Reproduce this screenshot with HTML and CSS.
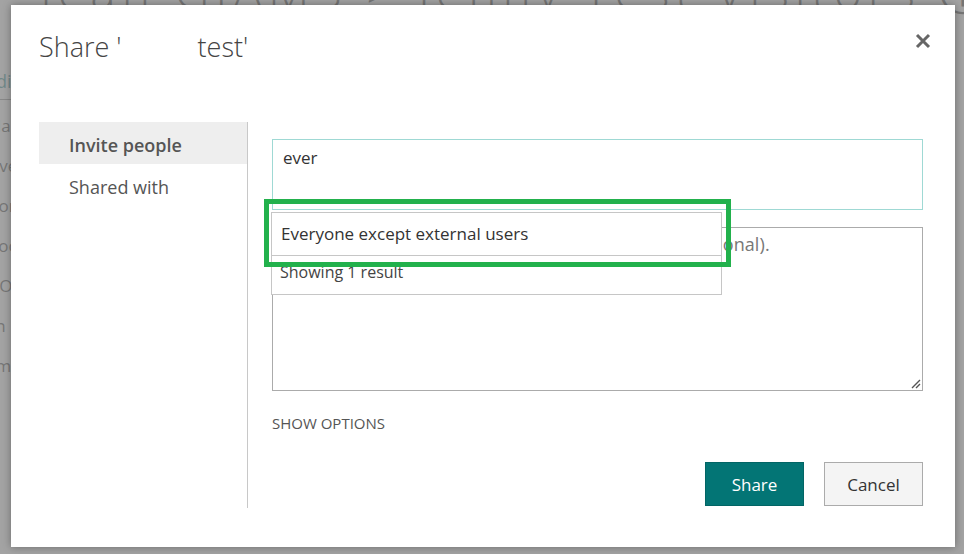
FILE: index.html
```html
<!DOCTYPE html>
<html>
<head>
  <title>Share</title>
  <link rel="stylesheet" href="styles.css">
</head>
<body>
  <!-- page behind the dialog -->
  <div id="page">
    <div class="page-title">Jean GIAMS &gt; Jenny Test Visitors &#9432;</div>
    <div class="page-side">
      <div class="side-link">Edit</div>
      <div class="side-rule"></div>
      <div class="side-item">Main</div>
      <div class="side-item">Over</div>
      <div class="side-item">Home</div>
      <div class="side-item">Doc</div>
      <div class="side-item">OO</div>
      <div class="side-item">Sn</div>
      <div class="side-item">Em</div>
    </div>
  </div>
  <div id="overlay"></div>

  <div id="dialog">
    <div class="dialog-head">
      <h1 class="dialog-title">Share '<span class="blanked"></span>test'</h1>
      <button class="close-button" title="Close">
        <svg width="16" height="16" viewBox="0 0 16 16"><path d="M2 2 L14 14 M14 2 L2 14" stroke="#666" stroke-width="3"/></svg>
      </button>
    </div>

    <div class="dialog-body">
      <div class="side-nav">
        <div class="nav-item selected">Invite people</div>
        <div class="nav-item">Shared with</div>
      </div>

      <div class="share-form">
        <div class="people-box">ever</div>
        <div class="message-box">
          <span class="placeholder">Include a personal message with this invitation (optional).</span>
          <svg class="grip" width="10" height="10" viewBox="0 0 10 10"><path d="M1 9 L9 1 M5 9 L9 5" stroke="#555" stroke-width="1.4"/></svg>
        </div>
        <div class="show-options">SHOW OPTIONS</div>
        <div class="actions">
          <button class="btn primary">Share</button>
          <button class="btn">Cancel</button>
        </div>

        <!-- suggestion list over the message box -->
        <div class="suggestions">
          <div class="suggestion">Everyone except external users</div>
          <div class="result-count">Showing 1 result</div>
        </div>
        <div class="highlight"></div>
      </div>
    </div>
  </div>
</body>
</html>
```

FILE: styles.css
```css
body {
  margin: 0;
  width: 964px;
  height: 554px;
  overflow: hidden;
  font-family: "Open Sans", "Noto Sans", sans-serif;
  color: #444;
  position: relative;
}

/* page behind */
#page {
  height: 554px;
  background: #fff;
}

.page-title {
  font-size: 48px;
  font-weight: 300;
  color: #222;
  margin-top: -42px;
  padding-left: 40px;
  white-space: nowrap;
  letter-spacing: 6px;
}

.page-side {
  padding-top: 44px;
  width: 120px;
}

.side-link {
  color: #03787c;
  font-size: 18px;
  margin-left: -14px;
  height: 30px;
}

.side-rule {
  border-top: 1px solid #777;
  margin: 0 0 6px;
}

.side-item {
  font-size: 17px;
  height: 40px;
  line-height: 40px;
  margin-left: -14px;
  color: #222;
}

#overlay {
  position: absolute;
  left: 0;
  top: 0;
  width: 964px;
  height: 554px;
  background: rgba(140, 140, 140, 0.8);
}

/* dialog */
#dialog {
  position: absolute;
  left: 11px;
  top: 5px;
  width: 944px;
  height: 542px;
  background: #fff;
  box-shadow: 0 0 8px rgba(0, 0, 0, 0.35);
  box-sizing: border-box;
  padding: 20px 32px 0 28px;
}

.dialog-head {
  position: relative;
  height: 97px;
}

.dialog-title {
  margin: 0;
  font-size: 27px;
  font-weight: 300;
  color: #444;
  line-height: 44px;
}

.blanked {
  display: inline-block;
  width: 76px;
}

.close-button {
  position: absolute;
  right: -8px;
  top: 8px;
  border: none;
  background: none;
  padding: 0;
  width: 16px;
  height: 16px;
  cursor: pointer;
}

.dialog-body {
  display: flex;
}

.side-nav {
  width: 208px;
  height: 386px;
  border-right: 1px solid #c8c8c8;
  flex-shrink: 0;
}

.nav-item {
  height: 42px;
  line-height: 46px;
  padding-left: 30px;
  font-size: 18px;
  color: #555;
}

.nav-item.selected {
  background: #eee;
  font-weight: 600;
}

.share-form {
  position: relative;
  padding: 17px 0 0 24px;
  width: 651px;
}

.people-box {
  height: 71px;
  border: 1px solid #9fd9d4;
  box-sizing: border-box;
  padding: 6px 10px;
  font-size: 17px;
  color: #333;
}

.message-box {
  position: relative;
  height: 164px;
  margin-top: 17px;
  border: 1px solid #ababab;
  box-sizing: border-box;
  padding: 4px 10px;
  font-size: 18px;
  letter-spacing: 0.1px;
  color: #777;
}

.grip {
  position: absolute;
  right: 1px;
  bottom: 1px;
}

.show-options {
  margin-top: 22px;
  font-size: 15px;
  color: #555;
}

.actions {
  display: flex;
  justify-content: flex-end;
  gap: 20px;
  margin-top: 29px;
}

.btn {
  width: 99px;
  height: 44px;
  box-sizing: border-box;
  font-family: inherit;
  font-size: 17px;
  color: #333;
  background: #f4f4f4;
  border: 1px solid #ababab;
}

.btn.primary {
  background: #037575;
  border-color: #026565;
  color: #fff;
}

.suggestions {
  position: absolute;
  left: 23px;
  top: 90px;
  width: 451px;
  background: #fff;
  border: 1px solid #c6c6c6;
  box-sizing: border-box;
}

.suggestion {
  height: 42px;
  line-height: 42px;
  padding-left: 9px;
  font-size: 17px;
  color: #333;
  border-bottom: 1px solid #c6c6c6;
}

.result-count {
  height: 38px;
  line-height: 32px;
  padding-left: 8px;
  font-size: 16px;
  color: #444;
}

.highlight {
  position: absolute;
  left: 16px;
  top: 77px;
  width: 467px;
  height: 68px;
  border: 5px solid #22b14c;
  box-sizing: border-box;
}
```
